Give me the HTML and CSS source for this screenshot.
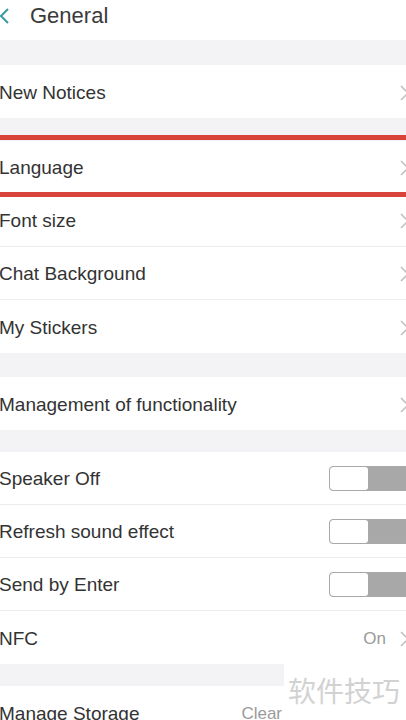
FILE: index.html
```html
<!DOCTYPE html>
<html>
<head>
<meta charset="utf-8">
<link rel="stylesheet" href="styles.css">
</head>
<body>
<div class="screen">
  <div class="header">
    <svg class="back" width="12" height="18" viewBox="0 0 12 18"><path d="M9 2 L2 9 L9 16" fill="none" stroke="#3a9aa0" stroke-width="2"/></svg>
    <span class="title">General</span>
  </div>
  <div class="gap g1"></div>
  <div class="row"><span class="label">New Notices</span><svg class="chev" width="9" height="16" viewBox="0 0 9 16"><path d="M1 1 L8 8 L1 15" fill="none" stroke="#bdbdbd" stroke-width="1.5"/></svg></div>
  <div class="gap g2"></div>
  <div class="row sep"><span class="label">Language</span><svg class="chev" width="9" height="16" viewBox="0 0 9 16"><path d="M1 1 L8 8 L1 15" fill="none" stroke="#bdbdbd" stroke-width="1.5"/></svg></div>
  <div class="row sep"><span class="label">Font size</span><svg class="chev" width="9" height="16" viewBox="0 0 9 16"><path d="M1 1 L8 8 L1 15" fill="none" stroke="#bdbdbd" stroke-width="1.5"/></svg></div>
  <div class="row sep"><span class="label">Chat Background</span><svg class="chev" width="9" height="16" viewBox="0 0 9 16"><path d="M1 1 L8 8 L1 15" fill="none" stroke="#bdbdbd" stroke-width="1.5"/></svg></div>
  <div class="row"><span class="label">My Stickers</span><svg class="chev" width="9" height="16" viewBox="0 0 9 16"><path d="M1 1 L8 8 L1 15" fill="none" stroke="#bdbdbd" stroke-width="1.5"/></svg></div>
  <div class="gap g5"></div>
  <div class="row"><span class="label">Management of functionality</span><svg class="chev" width="9" height="16" viewBox="0 0 9 16"><path d="M1 1 L8 8 L1 15" fill="none" stroke="#bdbdbd" stroke-width="1.5"/></svg></div>
  <div class="gap g3"></div>
  <div class="row sep"><span class="label">Speaker Off</span><span class="toggle"><span class="knob"></span></span></div>
  <div class="row sep"><span class="label">Refresh sound effect</span><span class="toggle"><span class="knob"></span></span></div>
  <div class="row sep"><span class="label">Send by Enter</span><span class="toggle"><span class="knob"></span></span></div>
  <div class="row"><span class="label">NFC</span><span class="value">On</span><svg class="chev" width="9" height="16" viewBox="0 0 9 16"><path d="M1 1 L8 8 L1 15" fill="none" stroke="#bdbdbd" stroke-width="1.5"/></svg></div>
  <div class="gap g4"></div>
  <div class="row"><span class="label">Manage Storage</span><span class="value clear">Clear</span></div>
  <div class="highlight"></div>
  <div class="watermark">软件技巧</div>
</div>
</body>
</html>
```
FILE: styles.css
```css
html, body { margin: 0; padding: 0; }
body { background: #f3f2f5; font-family: "Liberation Sans", Arial, sans-serif; }
.screen { position: relative; width: 406px; height: 720px; overflow: hidden; background: #f3f2f5; }
.header { height: 40px; background: #fff; display: flex; align-items: center; }
.back { margin-left: -1px; margin-top: -9px; }
.title { margin-left: 19px; font-size: 22px; color: #3a3a3a; margin-top: -8px; }
.g1 { height: 25px; }
.g2 { height: 23px; }
.g3 { height: 22px; }
.g4 { height: 22px; }
.g5 { height: 24px; }
.row { height: 53px; background: #fff; display: flex; align-items: center; position: relative; }
.row.sep { border-bottom: 1px solid #ededed; height: 52px; }
.label { font-size: 19px; color: #333; margin-left: -1px; margin-top: 2px; flex: 1; white-space: nowrap; }
.chev { flex-shrink: 0; margin-right: -3px; margin-top: 2px; }
.value { font-size: 17px; color: #9a9a9a; margin-right: 14px; margin-top: 2px; }
.clear { margin-right: 124px; }
.toggle { flex-shrink: 0; width: 80px; height: 23px; border: 1px solid #a9a9a9; border-radius: 4px; background: #a8a8a8; margin-right: -5px; display: flex; overflow: hidden; }
.knob { width: 38px; height: 23px; background: #fff; border-radius: 3px; }
.highlight { position: absolute; left: 0; top: 135px; width: 406px; height: 52px; border-top: 5px solid #d9443a; border-bottom: 5px solid #d9443a; }
.watermark { position: absolute; left: 284px; top: 662px; width: 122px; height: 48px; background: #fff; color: #d2d2d2; font-family: "Noto Sans CJK SC", sans-serif; font-size: 28px; line-height: 56px; text-align: right; padding-right: 6px; box-sizing: border-box; }
```
